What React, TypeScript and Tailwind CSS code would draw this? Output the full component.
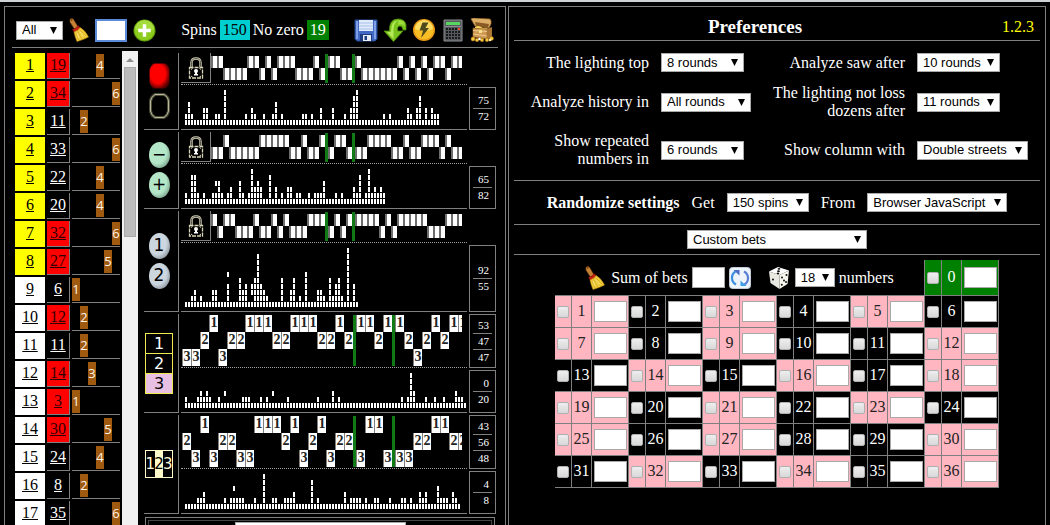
import { useId, useState, type ReactNode } from "react";
import clsx from "clsx";

const RED_NUMBERS = [1, 3, 5, 7, 9, 12, 14, 16, 18, 19, 21, 23, 25, 27, 30, 32, 34, 36];

// [number, repeats]
const spins = [
    [19, 4], [34, 6], [11, 2], [33, 6], [22, 4], [20, 4], [32, 6], [27, 5], [6, 1],
    [12, 2], [11, 2], [14, 3], [3, 1], [30, 5], [24, 4], [8, 2], [35, 6],
];

// Histories: U = upper half, D = lower half, | = zero
const colorHistory = "UUDDDDUUDUDUUUDDDUD|UUDD|UDDDDDDUDUDUDUUDUU";
const parityHistory = "DDUDDDDDUUUUUDDUDDU|DUUD|DDUUUUDDUDDUUUDUDD";
const halfHistory = "UDUUDDDUDDUDUDDDUUU|DUDU|UUUUDUDUUUUUDDDUUU";
const dozenHistory = "3321322111221112212|1121|12321211";
const columnHistory = "2313223311121321322|3113|33221122";

// Bar heights, one base-36 digit per column
const colorBars = "2421113311" + "2216111111" + "2132112112" + "4121111112" + "2121131113" + "1112135611" + "1111112121" + "1111321351" + "31322";
const parityBars = "2155212112" + "4421231142" + "1263431151" + "3121331221" + "1212224111" + "2121113251" + "2623232";
const halfBars = "1123121113" + "3111611153" + "4145943211" + "1151135121" + "6111332152" + "4521a141";
const dozenBars = "2111232321" + "1213111112" + "2211121213" + "1111211111" + "1111211113" + "1211111111" + "1111111111" + "1121263111" + "2112112111" + "3221";
const columnBars = "1111223111" + "1112124222" + "1112116112" + "2112223111" + "1151211111" + "1113122221" + "2112211121" + "1122121132" + "3111422213" + "21";

function Select({ options, className, id, label }: { options: string[]; className: string; id?: string; label?: string }) {
    return (
        <span className={clsx("relative block h-[19px] shrink-0", className)}>
            <select
                id={id}
                aria-label={label}
                className="block h-full w-full appearance-none border border-[#a9a9a9] bg-white pl-[5px] font-['Liberation_Sans',sans-serif] text-[13px] leading-4 text-black outline-none"
            >
                {options.map((option) => (
                    <option key={option}>{option}</option>
                ))}
            </select>
            <svg viewBox="0 0 7 7" className="pointer-events-none absolute top-[6px] right-[6px] h-[7px] w-[7px]">
                <path d="M0 0h7L3.5 7z" fill="#000" />
            </svg>
        </span>
    );
}

function BroomIcon() {
    return (
        <svg viewBox="0 0 20 24" className="h-6 w-5 shrink-0">
            <path d="M1 1.5Q3-.5 4.5 1.5L9 9 5.500 11 1 4Z" fill="#c78235" stroke="#8a5014" strokeWidth=".6" />
            <circle cx="2.700" cy="2" r=".8" fill="#5b330d" />
            <path d="M3.500 11.500Q7 11 9 7.500L11 9.500Q9 13.500 5 14Z" fill="#c81e14" stroke="#7d0d08" strokeWidth=".5" />
            <path d="M5 14Q9 13 11 9.500Q16 12 19.500 19Q15 21.500 8 23.500Q6 19 5 14Z" fill="#f3cf3b" stroke="#b8860b" strokeWidth=".6" />
            <path d="M7 14.500l3 8M8.500 13.500l4.500 8M9.500 12.500l6 7.500M10.500 11.500l7 7" stroke="#c9971b" strokeWidth=".6" />
            <path d="M8 15l2 5M10.500 13.500l4 5" stroke="#fff29a" strokeWidth=".8" />
        </svg>
    );
}

function AddIcon() {
    return (
        <svg viewBox="0 0 24 24" className="h-[23px] w-[23px]">
            <circle cx="12" cy="12" r="11.500" fill="#5f9b0c" />
            <circle cx="12" cy="12" r="10.500" fill="#8ccc1c" />
            <path d="M2 11A10 10 0 0 1 22 11Q12 15 2 11Z" fill="#a5dc3c" />
            <path d="M10.200 5.500h3.600v4.700h4.700v3.600h-4.700v4.700h-3.600v-4.700H5.500v-3.600h4.700z" fill="#fff" />
        </svg>
    );
}

function DiskIcon() {
    return (
        <svg viewBox="0 0 24 24" className="h-6 w-6">
            <path d="M1 2h22v19l-2 2H3L1 21Z" fill="#4169c4" stroke="#274a96" />
            <path d="M2 3h2v18H2zM20 3h2v18h-2z" fill="#7f9fe6" />
            <path d="M5 2h14v11H5z" fill="#dfeafa" />
            <path d="M5 5h14M5 8h14M5 11h14" stroke="#a9c0e8" />
            <path d="M6 16h12v7H6z" fill="#1f3c80" />
            <path d="M9 17h8v6H9z" fill="#e8edf5" />
            <path d="M10.500 18h2.500v4h-2.500z" fill="#1f3c80" />
        </svg>
    );
}

function UndoIcon() {
    return (
        <svg viewBox="0 0 24 24" className="h-6 w-6">
            <path d="M23 12V7Q22 1 15 1Q6 1 6.500 13H1L10.500 23.500 20 13H14.500Q14 8 17 8Q19.500 8 20 12Z" fill="#7cc41e" stroke="#4f8f0a" strokeWidth=".8" />
            <path d="M8 14Q8 3 15 2.200Q10 5 10.500 14V21L4 14H8Z" fill="#b6e95a" />
            <path d="M15 2Q22 2 22 8Q19 5 15.500 7Z" fill="#a0dc3c" />
        </svg>
    );
}

function BoltIcon() {
    return (
        <svg viewBox="0 0 24 24" className="h-6 w-6">
            <circle cx="12" cy="12" r="11" fill="#e89a14" />
            <circle cx="12" cy="12" r="9.500" fill="#f8bc24" />
            <path d="M3 11A9 9 0 0 1 21 11Q12 15 3 11Z" fill="#fddc62" />
            <path d="M10.500 4.500h6l-3 5.500h3.500L9 20l2-7.500H7.500Z" fill="#4f4a1c" />
        </svg>
    );
}

function CalculatorIcon() {
    return (
        <svg viewBox="0 0 24 24" className="h-6 w-6">
            <path d="M3 2h18v21H3z" fill="#55595c" stroke="#8b8f92" />
            <path d="M5 4h14v3H5z" fill="#57d65f" />
            <path d="M4 8.500h16" stroke="#8b8f92" />
            {[10, 13, 16, 19].map((y) =>
                [5, 8, 11, 14, 17].map((x) => (
                    <rect key={`${x}-${y}`} x={x} y={y} width="2" height="2" fill={x === 17 && y === 10 ? "#f04a28" : "#17191a"} />
                ))
            )}
        </svg>
    );
}

function ChestIcon() {
    return (
        <svg viewBox="0 0 24 24" className="h-6 w-6">
            <path d="M1 1Q1 0 4 0L20 1Q22 3 21 6L19 10 5 8Z" fill="#dcae68" stroke="#8d5c22" strokeWidth=".7" />
            <path d="M5 4l14 2-1 4L6 8Z" fill="#8a5a24" />
            <path d="M3 10l14 1v10L3 19Z" fill="#d09a52" stroke="#8d5c22" strokeWidth=".7" />
            <path d="M17 11l5-2v9l-5 4Z" fill="#ac7634" />
            <path d="M3 12.500l14 1M3 16l14 2" stroke="#ecc98e" />
            <path d="M5 9q3-2 6 0t7 1l-1 1L5 10Z" fill="#f6d05a" />
            <path d="M9 12h3v3H9z" fill="#f6e08a" />
            <g fill="#f7c640" stroke="#b87a10" strokeWidth=".4">
                <circle cx="3" cy="21" r="2" />
                <circle cx="7" cy="22" r="1.800" />
                <circle cx="12" cy="22" r="1.800" />
                <circle cx="17" cy="22" r="1.800" />
                <circle cx="21.500" cy="20.500" r="2" />
            </g>
            <circle cx="9.500" cy="21" r="1.300" fill="#fff" />
            <circle cx="20" cy="22" r="1.200" fill="#ffefc0" />
        </svg>
    );
}

function RefreshIcon() {
    return (
        <svg viewBox="0 0 22 22" className="h-[22px] w-[22px]">
            <rect x=".5" y=".5" width="21" height="21" rx="3" fill="#eef4fb" stroke="#c3ccd6" />
            <path d="M6.500 4.500A7.500 7.500 0 0 0 7 17.500" fill="none" stroke="#3f8fe0" strokeWidth="2.200" />
            <path d="M15.500 17.500A7.500 7.500 0 0 0 15 4.500" fill="none" stroke="#5a7fd6" strokeWidth="2.200" />
            <path d="M4.500 3h6v5.500Z" fill="#4a6fc8" />
            <path d="M17.500 19h-6v-5.500Z" fill="#3f9ee8" />
        </svg>
    );
}

function DiceIcon() {
    return (
        <svg viewBox="0 0 20 22" className="h-[22px] w-5 shrink-0">
            <path d="M9 0L20 3.500 10.500 8 0 4.500Z" fill="#fff" />
            <path d="M0 4.500L10.500 8V22L1.500 16Z" fill="#e9e9e2" />
            <path d="M20 3.500L18.500 17 10.500 22V8Z" fill="#f6f6ee" />
            <g fill="#111">
                <ellipse cx="10" cy="1.800" rx="1.400" ry=".9" />
                <ellipse cx="9.500" cy="4.200" rx="1.400" ry=".9" />
                <ellipse cx="9" cy="6.400" rx="1.400" ry=".8" />
                <circle cx="4" cy="12.500" r="1" />
                <circle cx="13" cy="10.500" r="1" />
                <circle cx="17.500" cy="8" r="1" />
                <circle cx="15" cy="13.500" r="1" />
                <circle cx="12.800" cy="17.800" r="1" />
                <circle cx="17" cy="15" r="1" />
            </g>
        </svg>
    );
}

function LockIcon() {
    return (
        <svg viewBox="0 0 16 22" className="h-[22px] w-4">
            <path d="M3.500 10V5.500Q3.500 1.500 8 1.500T12.500 5.500V10" fill="none" stroke="#d9d5b8" strokeWidth="2.400" />
            <path d="M3.500 10V5.500Q3.500 1.500 8 1.500T12.500 5.500V10" fill="none" stroke="#222" strokeWidth=".7" />
            <rect x="1.500" y="10.500" width="13" height="10.500" fill="#000" stroke="#d9d5b8" strokeWidth="1.300" strokeDasharray="4 1" />
            <path d="M3 12.500l1.500-1M13 12.500l-1.500-1M3 19l1.500 1M13 19l-1.500 1" stroke="#d9d5b8" />
            <circle cx="8" cy="14" r="2" fill="#fff" />
            <path d="M7 14h2v3h1v1.500H6V17h1z" fill="#fff" />
        </svg>
    );
}

function NumberList() {
    return (
        <table className="border-separate border-spacing-0.5 text-center text-base leading-[22px]">
            <tbody>
                {spins.map(([number, repeats], i) => (
                    <tr key={i} className="h-[26px]">
                        <td className={clsx("w-[30px] p-0 pb-0.5", i < 8 ? "bg-[#ffff00]" : "bg-white")}>
                            <a href={`#spin-${i + 1}`} className="text-black underline">{i + 1}</a>
                        </td>
                        <td
                            className={clsx(
                                "w-[23px] border-r border-b border-[#808080] p-0 pb-0.5",
                                RED_NUMBERS.includes(number) ? "bg-[#ff0000] text-[#330000]" : "text-white"
                            )}
                        >
                            <a href={`#number-${number}`} className="underline">{number}</a>
                        </td>
                        <td className="w-12 border-b border-[#808080] p-0">
                            <span
                                className="block h-[23px] w-2 bg-[#a05a10] font-['Open_Sans',sans-serif] text-[13px] leading-[22px] text-[#fff4e6]"
                                style={{ marginLeft: (repeats - 1) * 8 }}
                            >
                                {repeats}
                            </span>
                        </td>
                    </tr>
                ))}
            </tbody>
        </table>
    );
}

function Scrollbar() {
    return (
        <div className="flex w-4 shrink-0 flex-col items-center bg-[#f1f1f1]">
            <svg viewBox="0 0 16 16" className="h-4 w-4">
                <path d="M4 11h8L8 7z" fill="#8f8f8f" />
            </svg>
            <div className="h-[170px] w-3 border border-[#a8a8a8] bg-[#bcbcbc]" />
        </div>
    );
}

function PairStrip({ history }: { history: string }) {
    let x = 0;
    return (
        <svg width="251" height="30" className="shrink-0" shapeRendering="crispEdges">
            {history.split("").map((mark, i) => {
                const left = x;
                x += mark === "|" ? 3 : 6;
                if (mark === "|") {
                    return <rect key={i} x={left} y="1" width="3" height="29" fill="#107a14" />;
                }
                return (
                    <g key={i}>
                        <rect x={left} y={mark === "U" ? 3 : 15} width="6" height="12" fill="#6e6e6e" />
                        <rect x={left + 2} y={mark === "U" ? 3 : 15} width="4" height="12" fill="#fff" />
                    </g>
                );
            })}
        </svg>
    );
}

function TripleStrip({ history }: { history: string }) {
    return (
        <div className="flex h-[53px] w-[281px] overflow-hidden pt-px pl-px">
            {history.split("").map((mark, i) =>
                mark === "|" ? (
                    <span key={i} className="h-[51px] w-[3px] shrink-0 bg-[#107a14]" />
                ) : (
                    <span
                        key={i}
                        className={clsx(
                            "h-[17px] w-[9px] shrink-0 border-l border-[#808080] bg-white text-center text-sm leading-4 font-bold text-[#222]",
                            mark === "2" && "mt-[17px]",
                            mark === "3" && "mt-[34px]"
                        )}
                    >
                        {mark}
                    </span>
                )
            )}
        </div>
    );
}

// "gaps" lists the missing blocks as "column:level"
function Histogram({ bars, height, gaps = [] }: { bars: string; height: number; gaps?: string[] }) {
    return (
        <svg width="282" height={height} className="mb-1 ml-1 block" shapeRendering="crispEdges">
            {bars.split("").map((digit, column) =>
                Array.from({ length: parseInt(digit, 36) }, (_, level) =>
                    gaps.includes(`${column}:${level + 1}`) ? null : (
                        <rect key={`${column}-${level}`} x={column * 3} y={height - 5 - level * 6} width="2" height="5" fill="#fff" />
                    )
                )
            )}
        </svg>
    );
}

function Values({ values, className }: { values: number[]; className?: string }) {
    return (
        <div className={clsx("flex flex-col justify-center border border-[#808080] px-[3px] text-right text-[11px] leading-[15px]", className)}>
            {values.map((value, i) => (
                <div key={i} className={clsx("pr-[3px]", i > 0 && "border-t border-[#808080]")}>
                    {value}
                </div>
            ))}
        </div>
    );
}

interface GroupProps {
    marks: ReactNode;
    strip: ReactNode;
    chart: ReactNode;
    values: ReactNode;
}

function Group({ marks, strip, chart, values }: GroupProps) {
    return (
        <section className="flex gap-0.5">
            <div className="flex w-[35px] shrink-0 flex-col items-center justify-center gap-1 border-r border-b border-[#808080] pr-1">
                {marks}
            </div>
            <div className="min-w-0 flex-1 overflow-hidden border-b border-[#808080]">
                <div className="border-b border-dotted border-[#a0a0a0]">{strip}</div>
                {chart}
            </div>
            <div className="flex w-[27px] shrink-0 flex-col gap-0.5">{values}</div>
        </section>
    );
}

function PairGroup({ marks, history, bars, height, gaps, values }: {
    marks: ReactNode;
    history: string;
    bars: string;
    height: number;
    gaps?: string[];
    values: number[];
}) {
    return (
        <Group
            marks={marks}
            strip={
                <div className="flex h-[31px] overflow-hidden">
                    <button aria-label="Lock" className="flex h-[30px] w-[30px] shrink-0 items-center justify-center border-r border-b border-[#808080]">
                        <LockIcon />
                    </button>
                    <PairStrip history={history} />
                </div>
            }
            chart={<Histogram bars={bars} height={height} gaps={gaps} />}
            values={
                <div className="flex flex-1 flex-col pt-[34px]">
                    <Values values={values} className="flex-1" />
                </div>
            }
        />
    );
}

function Ball({ tone, children }: { tone: "green" | "silver"; children: ReactNode }) {
    return (
        <button
            className={clsx(
                "flex h-[26px] w-[21px] items-center justify-center rounded-[50%] pb-0.5 font-['DejaVu_Sans',sans-serif] text-[17px] leading-none text-black",
                tone === "green"
                    ? "bg-radial-[at_40%_40%] from-[#b4e6c8] from-50% to-[#4c6c58]"
                    : "bg-radial-[at_40%_40%] from-[#ccd6de] from-50% to-[#5c646c]"
            )}
        >
            {children}
        </button>
    );
}

function ColorMarks() {
    return (
        <>
            <button aria-label="Red" className="h-[26px] w-[21px]">
                <svg viewBox="0 0 21 26" className="h-full w-full">
                    <defs>
                        <radialGradient id="red-mark" cx=".42" cy=".42" r=".62">
                            <stop offset=".6" stopColor="#ff0000" />
                            <stop offset="1" stopColor="#500000" />
                        </radialGradient>
                    </defs>
                    <path d="M5 .5h11Q20.500 3 20.500 7v12Q20 23 16 25.500H5Q1 23 .5 19V7Q1 3 5 .5Z" fill="url(#red-mark)" />
                </svg>
            </button>
            <button aria-label="Black" className="h-[26px] w-[21px]">
                <svg viewBox="0 0 21 26" className="h-full w-full">
                    <path d="M6 1.500h9Q19.500 4 19.500 8v10Q19 22 15 24.500H6Q2 22 1.500 18V8Q2 4 6 1.500Z" fill="#000" stroke="#4a4a38" strokeWidth="3" />
                    <path d="M6 1.500h9Q19.500 4 19.500 8v10Q19 22 15 24.500H6Q2 22 1.500 18V8Q2 4 6 1.500Z" fill="none" stroke="#b9b99a" />
                </svg>
            </button>
        </>
    );
}

function DozenMarks() {
    return (
        <div className="flex w-7 flex-col border-t border-[#f0e850] text-center font-['DejaVu_Sans',sans-serif] text-base">
            {[1, 2, 3].map((n) => (
                <button key={n} className={clsx("h-5 border-x border-b border-[#f0e850] leading-[19px]", n === 3 ? "bg-[#e8c0e4] text-black" : "text-white")}>
                    {n}
                </button>
            ))}
        </div>
    );
}

function ColumnMarks() {
    return (
        <div className="flex h-7 w-7 border border-[#fff8c8] font-['DejaVu_Sans',sans-serif] text-[15px]">
            {[1, 2, 3].map((n) => (
                <button key={n} className={clsx("flex min-w-0 flex-1 items-center justify-center", n === 2 ? "bg-[#fff8c8] text-black" : "text-[#fff8dc]")}>
                    {n}
                </button>
            ))}
        </div>
    );
}

function TrackerPanel() {
    return (
        <section className="flex min-w-0 flex-col overflow-hidden border border-b-0 border-[#808080] px-[7px]">
            <header className="flex h-[41px] shrink-0 items-center justify-between border-b border-[#808080] px-1 pt-1.5">
                <div className="flex items-center gap-1.5">
                    <Select label="Numbers shown" options={["All"]} className="w-[47px]" />
                    <button aria-label="Clear"><BroomIcon /></button>
                    <input aria-label="Number" className="h-[23px] w-8 border-2 border-[#5b8ad8] bg-white px-1 text-black outline-none" />
                    <button aria-label="Add number"><AddIcon /></button>
                </div>
                <p className="flex items-center gap-[3px] whitespace-nowrap">
                    Spins
                    <span className="bg-[#00ced1] px-[3px] leading-5 text-black">150</span>
                    No zero
                    <span className="bg-[#008000] px-[3px] leading-5">19</span>
                </p>
                <div className="flex gap-[5px]">
                    <button aria-label="Save"><DiskIcon /></button>
                    <button aria-label="Undo"><UndoIcon /></button>
                    <button aria-label="Quick spin"><BoltIcon /></button>
                    <button aria-label="Calculator"><CalculatorIcon /></button>
                    <button aria-label="Chest"><ChestIcon /></button>
                </div>
            </header>

            <div className="flex min-h-0 flex-1 overflow-hidden pt-[3px] pr-0.5 pl-px">
                <div className="shrink-0">
                    <NumberList />
                </div>
                <Scrollbar />
                <div className="flex min-w-0 flex-1 flex-col gap-0.5 pt-0.5 pl-1.5">
                    <PairGroup marks={<ColorMarks />} history={colorHistory} bars={colorBars} height={40} values={[75, 72]} />
                    <PairGroup
                        marks={<><Ball tone="green">−</Ball><Ball tone="green">+</Ball></>}
                        history={parityHistory}
                        bars={parityBars}
                        height={40}
                        gaps={["10:3"]}
                        values={[65, 82]}
                    />
                    <PairGroup
                        marks={<><Ball tone="silver">1</Ball><Ball tone="silver">2</Ball></>}
                        history={halfHistory}
                        bars={halfBars}
                        height={64}
                        gaps={["14:5", "22:2"]}
                        values={[92, 55]}
                    />
                    <Group
                        marks={<DozenMarks />}
                        strip={<TripleStrip history={dozenHistory} />}
                        chart={<Histogram bars={dozenBars} height={40} gaps={["13:2", "29:2"]} />}
                        values={<><Values values={[53, 47, 47]} className="h-[54px]" /><Values values={[0, 20]} className="flex-1" /></>}
                    />
                    <Group
                        marks={<ColumnMarks />}
                        strip={<TripleStrip history={columnHistory} />}
                        chart={<Histogram bars={columnBars} height={40} gaps={["16:3"]} />}
                        values={<><Values values={[43, 56, 48]} className="h-[54px]" /><Values values={[4, 8]} className="flex-1" /></>}
                    />
                    <div className="mx-px mt-px border border-[#808080] p-0.5">
                        <div className="flex justify-center border border-[#444] pt-px">
                            <Select label="Strategy" options={[""]} className="w-1/2" />
                        </div>
                    </div>
                </div>
            </div>
        </section>
    );
}

function Preference({ label, options, className }: { label: string; options: string[]; className: string }) {
    const id = useId();
    return (
        <>
            <label htmlFor={id} className="text-right leading-[18px]">{label}</label>
            <Select id={id} options={options} className={className} />
        </>
    );
}

function BetCells({ number }: { number: number }) {
    const [checked, setChecked] = useState(false);
    const cell = clsx(
        "border-r border-b border-[#808080] p-0 text-center",
        number === 0 && "bg-[#008000] text-white",
        number > 0 && (RED_NUMBERS.includes(number) ? "bg-[#ffb6c1] text-[#222]" : "bg-black text-white")
    );
    return (
        <>
            <td className={clsx(cell, "w-[17px]")}>
                <input
                    id={`bet-${number}`}
                    type="checkbox"
                    checked={checked}
                    onChange={() => setChecked(!checked)}
                    className="mx-auto block h-3 w-3 appearance-none rounded-xs border border-[#b0b0b0] bg-linear-to-b from-[#eeeeee] to-[#d8d8d8] checked:from-[#8fb5ee] checked:to-[#5b8ad8]"
                />
            </td>
            <td className={clsx(cell, "w-5 pb-0.5")}>
                <label htmlFor={`bet-${number}`}>{number}</label>
            </td>
            <td className={clsx(cell, "w-[37px]")}>
                <input aria-label={`Bet on ${number}`} className="mx-auto block h-[21px] w-[33px] border border-[#a9a9a9] bg-white px-0.5 text-[13px] text-black outline-none" />
            </td>
        </>
    );
}

function BetTable() {
    return (
        <table className="mx-auto border-separate border-spacing-0 leading-5">
            <tbody>
                <tr className="h-9">
                    <td colSpan={15} className="border-r border-b border-[#808080] p-0">
                        <div className="flex items-center justify-center gap-1">
                            <button aria-label="Clear bets" className="mr-0.5"><BroomIcon /></button>
                            <label htmlFor="bets-sum">Sum of bets</label>
                            <input id="bets-sum" className="h-[21px] w-[33px] border border-[#a9a9a9] bg-white px-0.5 text-[13px] text-black outline-none" />
                            <button aria-label="Refresh"><RefreshIcon /></button>
                            <button aria-label="Random numbers" className="mr-0.5 ml-3.5"><DiceIcon /></button>
                            <Select id="bets-count" options={["18"]} className="w-10" />
                            <label htmlFor="bets-count">numbers</label>
                        </div>
                    </td>
                    <BetCells number={0} />
                </tr>
                {[0, 6, 12, 18, 24, 30].map((start) => (
                    <tr key={start} className="h-8">
                        {[1, 2, 3, 4, 5, 6].map((n) => (
                            <BetCells key={n} number={start + n} />
                        ))}
                    </tr>
                ))}
            </tbody>
        </table>
    );
}

function PreferencesPanel() {
    return (
        <section className="min-w-0 border border-b-0 border-[#808080] px-[5px]">
            <header className="flex h-[34px] items-center border-b border-[#808080] pt-1.5">
                <h1 className="flex-1 text-center text-[19px] leading-6 font-bold">Preferences</h1>
                <a href="#changes" className="px-1.5 text-[#ffff00]">1.2.3</a>
            </header>

            <div className="grid grid-cols-[135fr_92fr_140fr_123fr] items-center gap-3 border-b border-[#808080] py-3">
                <Preference label="The lighting top" options={["8 rounds"]} className="w-[83px]" />
                <Preference label="Analyze saw after" options={["10 rounds"]} className="w-[83px]" />
                <Preference label="Analyze history in" options={["All rounds"]} className="w-[90px]" />
                <Preference label="The lighting not loss dozens after" options={["11 rounds"]} className="w-[83px]" />
                <Preference label="Show repeated numbers in" options={["6 rounds"]} className="w-[83px]" />
                <Preference label="Show column with" options={["Double streets"]} className="w-[111px]" />
            </div>

            <div className="flex items-center justify-center gap-3 border-b border-[#808080] py-3 leading-[19px]">
                <h2 className="font-bold">Randomize settings</h2>
                <label htmlFor="random-spins">Get</label>
                <Select id="random-spins" options={["150 spins"]} className="w-[82px]" />
                <label htmlFor="random-source">From</label>
                <Select id="random-source" options={["Browser JavaScript"]} className="w-[140px]" />
            </div>

            <div className="flex justify-center border-b border-[#808080] py-[5px]">
                <Select label="Bets" options={["Custom bets"]} className="w-[180px]" />
            </div>

            <div className="pt-[5px]">
                <BetTable />
            </div>
        </section>
    );
}

export default function App() {
    return (
        <main className="flex h-screen flex-col overflow-hidden bg-black font-['Liberation_Serif',serif] text-base text-white">
            <div className="h-0.5 shrink-0 bg-[#d0d3d6]" />
            <div className="grid min-h-0 flex-1 grid-cols-[502fr_538fr] gap-0.5 px-1 pt-1">
                <TrackerPanel />
                <PreferencesPanel />
            </div>
        </main>
    );
}
